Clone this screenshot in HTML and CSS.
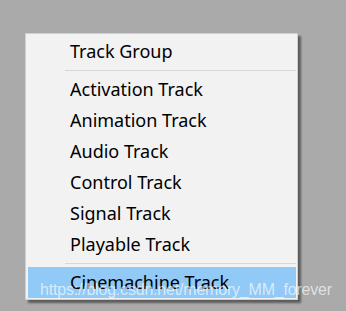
FILE: index.html
```html
<!DOCTYPE html>
<html>
<head>
<meta charset="utf-8">
<link rel="stylesheet" href="styles.css">
</head>
<body>
<div class="menu">
  <div class="item">Track Group</div>
  <div class="sep"></div>
  <div class="item">Activation Track</div>
  <div class="item">Animation Track</div>
  <div class="item">Audio Track</div>
  <div class="item">Control Track</div>
  <div class="item">Signal Track</div>
  <div class="item">Playable Track</div>
  <div class="sep"></div>
  <div class="item active">Cinemachine Track</div>
</div>
<div class="watermark">https://blog.csdn.net/memory_MM_forever</div>
</body>
</html>
```
FILE: styles.css
```css
html, body {
  margin: 0;
  padding: 0;
}
body {
  background: #aaaaaa;
  width: 346px;
  height: 311px;
  overflow: hidden;
  position: relative;
  padding: 33px 0 0 25px;
  box-sizing: border-box;
  font-family: "Noto Sans", "Open Sans", sans-serif;
}
.menu {
  width: 273px;
  box-sizing: border-box;
  background: #f2f2f2;
  border: 1px solid #cfcfcf;
  padding: 2px 1px 1px 2px;
  box-shadow: 3px 3px 2px rgba(0, 0, 0, 0.45);
  display: flex;
  flex-direction: column;
}
.item {
  height: 31px;
  line-height: 31px;
  padding-left: 42px;
  font-size: 18px;
  color: #000;
  white-space: nowrap;
}
.item.active {
  background: #91c9f7;
}
.sep {
  height: 7px;
  display: flex;
  align-items: center;
  padding-left: 37px;
}
.sep::before {
  content: "";
  display: block;
  flex: 1;
  height: 1px;
  background: #d7d7d7;
}
.watermark {
  position: absolute;
  left: 40px;
  top: 281px;
  font-family: "Liberation Sans", Arial, sans-serif;
  font-size: 16px;
  letter-spacing: -0.2px;
  color: rgba(255, 255, 255, 0.65);
  white-space: nowrap;
}
```
